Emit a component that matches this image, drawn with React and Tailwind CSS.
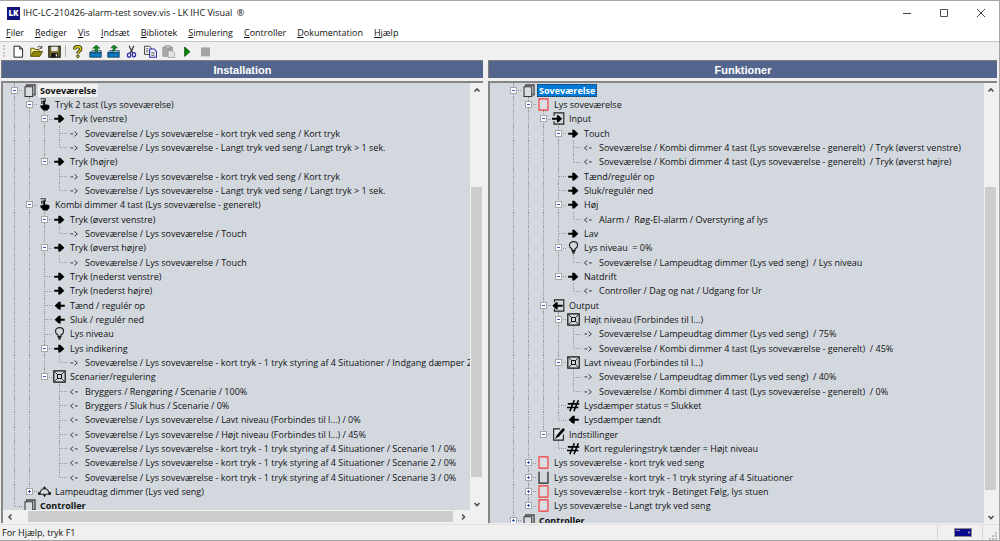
import React, { useState } from "react";

const menus = ["Filer", "Rediger", "Vis", "Indsæt", "Bibliotek", "Simulering", "Controller", "Dokumentation", "Hjælp"];

// [depth, icon, label, toggle]
const installation = [
  [0, "folder", "Soveværelse", "open"],
  [1, "touch", "Tryk 2 tast (Lys soveværelse)", "open"],
  [2, "right", "Tryk (venstre)", "open"],
  [3, "to", "Soveværelse / Lys soveværelse - kort tryk ved seng / Kort tryk"],
  [3, "to", "Soveværelse / Lys soveværelse - Langt tryk ved seng / Langt tryk > 1 sek."],
  [2, "right", "Tryk (højre)", "open"],
  [3, "to", "Soveværelse / Lys soveværelse - kort tryk ved seng / Kort tryk"],
  [3, "to", "Soveværelse / Lys soveværelse - Langt tryk ved seng / Langt tryk > 1 sek."],
  [1, "touch", "Kombi dimmer 4 tast (Lys soveværelse - generelt)", "open"],
  [2, "right", "Tryk (øverst venstre)", "open"],
  [3, "to", "Soveværelse / Lys soveværelse / Touch"],
  [2, "right", "Tryk (øverst højre)", "open"],
  [3, "to", "Soveværelse / Lys soveværelse / Touch"],
  [2, "right", "Tryk (nederst venstre)"],
  [2, "right", "Tryk (nederst højre)"],
  [2, "left", "Tænd / regulér op"],
  [2, "left", "Sluk / regulér ned"],
  [2, "bulb", "Lys niveau"],
  [2, "right", "Lys indikering", "open"],
  [3, "to", "Soveværelse / Lys soveværelse - kort tryk - 1 tryk styring af 4 Situationer / Indgang dæmper 2"],
  [2, "scene", "Scenarier/regulering", "open"],
  [3, "from", "Bryggers / Rengøring / Scenarie / 100%"],
  [3, "from", "Bryggers / Sluk hus / Scenarie / 0%"],
  [3, "from", "Soveværelse / Lys soveværelse / Lavt niveau (Forbindes til l...) / 0%"],
  [3, "from", "Soveværelse / Lys soveværelse / Højt niveau (Forbindes til l...) / 45%"],
  [3, "from", "Soveværelse / Lys soveværelse - kort tryk - 1 tryk styring af 4 Situationer / Scenarie 1 / 0%"],
  [3, "from", "Soveværelse / Lys soveværelse - kort tryk - 1 tryk styring af 4 Situationer / Scenarie 2 / 0%"],
  [3, "from", "Soveværelse / Lys soveværelse - kort tryk - 1 tryk styring af 4 Situationer / Scenarie 3 / 0%"],
  [1, "lamp", "Lampeudtag dimmer (Lys ved seng)", "closed"],
  [0, "folder", "Controller"],
];

const funktioner = [
  [0, "folder", "Soveværelse", "open"],
  [1, "redbox", "Lys soveværelse", "open"],
  [2, "input", "Input", "open"],
  [3, "right", "Touch", "open"],
  [4, "from", "Soveværelse / Kombi dimmer 4 tast (Lys soveværelse - generelt)  / Tryk (øverst venstre)"],
  [4, "from", "Soveværelse / Kombi dimmer 4 tast (Lys soveværelse - generelt)  / Tryk (øverst højre)"],
  [3, "right", "Tænd/regulér op"],
  [3, "right", "Sluk/regulér ned"],
  [3, "right", "Høj", "open"],
  [4, "from", "Alarm /  Røg-El-alarm / Overstyring af lys"],
  [3, "right", "Lav"],
  [3, "bulb", "Lys niveau  = 0%", "open"],
  [4, "from", "Soveværelse / Lampeudtag dimmer (Lys ved seng)  / Lys niveau"],
  [3, "right", "Natdrift", "open"],
  [4, "from", "Controller / Dag og nat / Udgang for Ur"],
  [2, "output", "Output", "open"],
  [3, "scene", "Højt niveau (Forbindes til l...)", "open"],
  [4, "to", "Soveværelse / Lampeudtag dimmer (Lys ved seng)  / 75%"],
  [4, "to", "Soveværelse / Kombi dimmer 4 tast (Lys soveværelse - generelt)  / 45%"],
  [3, "scene", "Lavt niveau (Forbindes til l...)", "open"],
  [4, "to", "Soveværelse / Lampeudtag dimmer (Lys ved seng)  / 40%"],
  [4, "to", "Soveværelse / Kombi dimmer 4 tast (Lys soveværelse - generelt)  / 0%"],
  [3, "hash", "Lysdæmper status = Slukket"],
  [3, "left", "Lysdæmper tændt"],
  [2, "edit", "Indstillinger", "open"],
  [3, "hash", "Kort reguleringstryk tænder = Højt niveau"],
  [1, "redbox", "Lys soveværelse - kort tryk ved seng", "closed"],
  [1, "cup", "Lys soveværelse - kort tryk - 1 tryk styring af 4 Situationer", "closed"],
  [1, "redbox", "Lys soveværelse - kort tryk - Betinget Følg, lys stuen", "closed"],
  [1, "redbox", "Lys soveværelse - Langt tryk ved seng", "closed"],
  [0, "folder", "Controller", "closed"],
];

const nodeIcons = {
  folder: (
    <>
      <path d="M4.500 3V1.200h10.300v12h-2" fill="none" stroke="#444" strokeWidth="1.600" />
      <path d="M2.500 3.500h9.500v12H2.500z" fill="#d9dde3" stroke="#333" strokeWidth="1.300" />
    </>
  ),
  touch: (
    <>
      <path d="M3 1h6v3H4.500v2.500H9" fill="none" stroke="#333" strokeWidth="1.300" />
      <path d="M6.500 3h2v5H11l3 1v3.500L12 14.500v1H6v-1L3 11.500V9h3.500z" fill="#000" />
    </>
  ),
  right: <path d="M1.500 7h5V3.500h2.500L14 8.200 9 13H6.500V9.500h-5z" fill="#000" />,
  left: <path d="M14.500 7h-5V3.500H7L2 8.200 7 13h2.500V9.500h5z" fill="#000" />,
  to: <path d="M3 8.500h3.500M8 5.500l3.500 3-3.500 3" stroke="#333" strokeWidth="1.200" fill="none" />,
  from: <path d="M12 8.500H8.500M6.500 5.500l-3.500 3 3.500 3" stroke="#333" strokeWidth="1.200" fill="none" />,
  bulb: (
    <path
      d="M6 11.500V9.500C4 8.500 3 7 3 5.200 3 2.500 5.200.8 8 .8s5 1.700 5 4.400c0 1.800-1 3.300-3 4.300v2zM6 13h4M6.500 15h3"
      fill="none"
      stroke="#222"
      strokeWidth="1.400"
    />
  ),
  scene: (
    <>
      <path d="M1 1h14v14H1z" fill="none" stroke="#111" strokeWidth="1.500" />
      <path d="M5.500 5.500h5v5h-5z" fill="none" stroke="#111" strokeWidth="1.300" />
      <path d="M2 2l3.500 3.500M14 2l-3.500 3.500M2 14l3.500-3.500M14 14l-3.500-3.500" stroke="#333" strokeWidth="1.200" />
    </>
  ),
  lamp: (
    <>
      <path d="M2 11.500C2.500 7 5 4.500 8 4.500s5.500 2.500 6 7z" fill="none" stroke="#222" strokeWidth="1.300" />
      <path d="M5.500 4.500 8 1.500l2.500 3zM0 9h3v3H0zM13 9h3v3h-3zM6 12h4l-2 3z" fill="#111" />
    </>
  ),
  redbox: <path d="M2.500 1h11v14h-11z" fill="#dcdde2" stroke="#ee3b3b" strokeWidth="1.400" />,
  cup: <path d="M2.500 1v14h11V1" fill="none" stroke="#222" strokeWidth="1.500" />,
  input: (
    <>
      <path d="M2.500 5V1h12v14h-12v-3.500" fill="none" stroke="#222" strokeWidth="1.400" />
      <path d="M0 7h6V4h2l4.500 4.200L8 12.500H6v-3H0z" fill="#000" />
    </>
  ),
  output: (
    <>
      <path d="M3 4V1h11.500v14H3v-3" fill="none" stroke="#222" strokeWidth="1.400" />
      <path d="M13 7H7V4H5L.5 8.200 5 12.500h2v-3h6z" fill="#000" />
    </>
  ),
  hash: <path d="M1 6h14M0 10.500h14M9 1.500 3.500 15M14 1.500 8.500 15" stroke="#000" strokeWidth="1.900" fill="none" />,
  edit: (
    <>
      <path d="M10 1H2v14h12V8" fill="#dfe3e8" stroke="#222" strokeWidth="1.400" />
      <path d="M13.500 0 16 2 9 10l-5.500 3.500L6 8.500z" fill="#000" />
    </>
  ),
};

const toolGroups = [
  [
    ["Ny", <path d="M2.500 1.500h7L13 5v10H2.500zM9.500 1.500V5H13" fill="#fff" stroke="#222" strokeWidth="1.200" />],
    [
      "Åbn",
      <>
        <path d="M1 14V4h4l1 1.500h5V8" fill="#f7ef8a" stroke="#5b5200" strokeWidth="1.200" />
        <path d="M1 14 4 8h11.500L12 14z" fill="#8f8400" stroke="#4a4300" />
        <path d="M9 3c2-2.200 4-1.800 5 .5M14.500 1v3h-3" fill="none" stroke="#222" />
      </>,
    ],
    [
      "Gem",
      <>
        <path d="M1 1.500h14v13.500H1z" fill="#77702a" stroke="#111" strokeWidth="1.300" />
        <path d="M4 2h8v5.500H4z" fill="#e8e8e8" />
        <path d="M4 10h8v5H4z" fill="#111" />
        <path d="M9.500 11h1.500v3H9.500z" fill="#eee" />
      </>,
    ],
  ],
  [
    [
      "Hjælp",
      <>
        <path d="M4.500 5.500C4.500 3 6 2 8.200 2S12 3.200 12 5.200C12 7.500 8.500 7.500 8.500 10.500" fill="none" stroke="#222" strokeWidth="4" />
        <path d="M4.500 5.500C4.500 3 6 2 8.200 2S12 3.200 12 5.200C12 7.500 8.500 7.500 8.500 10.500" fill="none" stroke="#d8cc00" strokeWidth="1.900" />
        <circle cx="8.500" cy="13.800" r="1.700" fill="#d8cc00" stroke="#222" />
      </>,
    ],
    [
      "Hent",
      <>
        <path d="M1 9.500 3.500 7H15v2.500z" fill="#9adcf5" stroke="#123" strokeWidth=".9" />
        <path d="M1 9.500h14V15H1z" fill="#0a7cc4" stroke="#0b3552" />
        <path d="M9 0l4.500 4h-3v4h-3V4h-3z" fill="#0a8a1c" stroke="#063d0c" strokeWidth=".6" />
      </>,
    ],
    [
      "Send",
      <>
        <path d="M1 9.500 3.500 7H15v2.500z" fill="#9adcf5" stroke="#123" strokeWidth=".9" />
        <path d="M1 9.500h14V15H1z" fill="#0a7cc4" stroke="#0b3552" />
        <path d="M8.500 0 13 3.500h-2.500C10.500 6 9 7.500 6 8c1.500-1 1.500-3 1.500-4.500H4.500z" fill="#0a8a1c" stroke="#063d0c" strokeWidth=".6" />
      </>,
    ],
    [
      "Klip",
      <>
        <path d="M5 1l4.500 9M11 1 6.500 10" stroke="#333" strokeWidth="1.400" fill="none" />
        <ellipse cx="5" cy="12.500" rx="2" ry="2.500" fill="none" stroke="#2a2aa8" strokeWidth="1.500" />
        <ellipse cx="11" cy="12" rx="2" ry="2.500" fill="none" stroke="#2a2aa8" strokeWidth="1.500" />
      </>,
    ],
  ],
  [
    [
      "Kopier",
      <>
        <path d="M.8 1.500h6L9 3.500v8H.8z" fill="#fff" stroke="#333" strokeWidth="1.200" />
        <path d="M7 5h5.500L15.300 8v7H7z" fill="#fff" stroke="#2a2aa8" strokeWidth="1.300" />
        <path d="M2.500 4.500h3M2.500 6.500h3M2.500 8.500h3M9 9h4M9 11h4M9 13h4" stroke="#445" strokeWidth=".9" />
      </>,
    ],
    [
      "Sæt ind",
      <>
        <path d="M1 2.500h12V14H1z" fill="#a8a8a8" stroke="#9a9a9a" />
        <path d="M4 1h6v3H4z" fill="#c8c8c8" stroke="#8c8c8c" />
        <path d="M7.500 7h5L15.500 10v5.500h-8z" fill="#e4e4e4" stroke="#9a9a9a" />
      </>,
    ],
  ],
  [
    ["Kør", <path d="M4.500 2.500v11.500l6.500-5.700z" fill="#008a00" stroke="#064d06" strokeWidth="1" />],
    ["Stop", <path d="M2.500 3h11v11h-11z" fill="#a3a3a3" />],
  ],
];

const arrows = {
  up: "M1.500 5.500 4 3l2.500 2.500",
  down: "M1.500 3 4 5.500 6.500 3",
  left: "M5.500 1.500 3 4l2.500 2.500",
  right: "M3 1.500 5.500 4 3 6.500",
};

function ScrollButton({ dir }) {
  return (
    <button aria-label={`Rul ${dir}`} className="flex h-[13px] w-[13px] shrink-0 items-center justify-center">
      <svg viewBox="0 0 8 8" className="h-2 w-2">
        <path d={arrows[dir]} fill="none" stroke="#505050" strokeWidth="1.600" />
      </svg>
    </button>
  );
}

// parts: share of the track before, under and after the thumb
function ScrollBar({ horizontal, parts }) {
  return (
    <div className={horizontal ? "flex h-[13px] min-w-0 flex-1" : "flex w-[13px] shrink-0 flex-col"}>
      <ScrollButton dir={horizontal ? "left" : "up"} />
      <div style={{ flexGrow: parts[0] }} />
      <div className={horizontal ? "my-px bg-[#cdcdcd]" : "mx-px bg-[#cdcdcd]"} style={{ flexGrow: parts[1] }} />
      <div style={{ flexGrow: parts[2] }} />
      <ScrollButton dir={horizontal ? "right" : "down"} />
    </div>
  );
}

function TreeRow({ row, guides, last, active, expanded, onToggle }) {
  const [depth, icon, label, toggle] = row;
  let labelClass = "px-[2px] whitespace-pre leading-[13px]";
  if (depth === 0) labelClass += " font-bold";
  if (active === "focus") labelClass += " bg-[#0078d7] text-white outline-1 -outline-offset-1 outline-dotted outline-[#333]";
  if (active === "idle") labelClass += " bg-[#f0f0f0]";

  return (
    <li role="treeitem" aria-level={depth + 1} className="flex h-[14px] items-center nth-[3n]:h-[15px]">
      {guides.map((on, i) => (
        <span key={i} className="flex w-[15px] shrink-0 self-stretch pl-[7px]">
          {on && <span className="border-l border-dotted border-[#96999e]" />}
        </span>
      ))}
      <span className="relative flex w-[15px] shrink-0 items-center justify-center self-stretch">
        <span
          className={
            last
              ? "absolute top-0 left-[7px] h-1/2 border-l border-dotted border-[#96999e]"
              : "absolute top-0 left-[7px] h-full border-l border-dotted border-[#96999e]"
          }
        />
        <span className="absolute top-1/2 right-0 left-[8px] border-t border-dotted border-[#96999e]" />
        {toggle && (
          <button
            onClick={onToggle}
            aria-label={expanded ? `Fold ${label} sammen` : `Fold ${label} ud`}
            className="relative h-[7px] w-[7px] border border-[#a3a6ab] bg-white"
          >
            <svg viewBox="0 0 5 5" className="block h-full w-full">
              <path d={expanded ? "M1 2.500h3" : "M1 2.500h3M2.500 1v3"} stroke="#3b57b5" strokeWidth="1" />
            </svg>
          </button>
        )}
      </span>
      <svg viewBox="0 0 16 16" className="mr-[2px] ml-px h-[13px] w-[13px] shrink-0">
        {nodeIcons[icon]}
      </svg>
      <span className={labelClass}>{label}</span>
    </li>
  );
}

function Tree({ rows, label, active, className }) {
  const [closed, setClosed] = useState(() => rows.map((r) => r[3] === "closed"));

  const toggle = (index) => {
    setClosed(closed.map((c, i) => (i === index ? !c : c)));
  };

  // true when another row on this level follows inside the same parent
  const continues = (index, level) => {
    const next = rows.slice(index + 1).find((r) => r[0] <= level);
    return next !== undefined && next[0] === level;
  };

  let hideBelow = Infinity;
  const visible = [];
  rows.forEach((row, i) => {
    if (row[0] > hideBelow) return;
    hideBelow = closed[i] ? row[0] : Infinity;
    visible.push(i);
  });

  return (
    <ul role="tree" aria-label={label} className={`min-w-0 flex-1 overflow-hidden bg-[#d3d8df] ${className}`}>
      {visible.map((i) => (
        <TreeRow
          key={i}
          row={rows[i]}
          guides={Array.from({ length: rows[i][0] }, (_, level) => continues(i, level))}
          last={!continues(i, rows[i][0])}
          active={i === 0 ? active : undefined}
          expanded={!closed[i]}
          onToggle={() => toggle(i)}
        />
      ))}
    </ul>
  );
}

function Pane({ title, vertical, horizontal, children, className }) {
  return (
    <section className={`flex min-w-0 flex-col ${className}`}>
      <h2 className="h-[18px] shrink-0 border-t border-l border-[#7d7d7d] bg-[#53658d] text-center font-['Liberation_Sans',sans-serif] text-[11px] leading-[18px] font-bold text-white">
        {title}
      </h2>
      <div className="mt-[3px] flex min-h-0 flex-1 flex-col border-t-2 border-l-2 border-[#858585]">
        <div className="flex min-h-0 flex-1">
          {children}
          <ScrollBar parts={vertical} />
        </div>
        {horizontal && (
          <div className="flex pr-[13px]">
            <ScrollBar horizontal parts={horizontal} />
          </div>
        )}
      </div>
    </section>
  );
}

export default function App() {
  return (
    <div className="flex h-screen flex-col border-t border-r border-b border-[#a6a6a6] bg-[#f0f0f0] font-['Open_Sans',sans-serif] text-[9px] text-[#111]">
      <header className="flex h-6 shrink-0 items-center bg-white pl-[7px]">
        <span className="flex h-[13px] w-[13px] items-center justify-center bg-[#12127c] text-[8px] font-extrabold text-white">LK</span>
        <h1 className="ml-[3px] flex-1 whitespace-pre">IHC-LC-210426-alarm-test sovev.vis - LK IHC Visual  ®</h1>
        <button aria-label="Minimer" className="flex h-full w-[37px] items-center justify-center">
          <svg viewBox="0 0 10 10" className="h-[10px] w-[10px]">
            <path d="M1 5.500h8" stroke="#444" />
          </svg>
        </button>
        <button aria-label="Maksimer" className="flex h-full w-[37px] items-center justify-center">
          <svg viewBox="0 0 10 10" className="h-[10px] w-[10px]">
            <path d="M1.500 1.500h7v7h-7z" fill="none" stroke="#555" />
          </svg>
        </button>
        <button aria-label="Luk" className="flex h-full w-[37px] items-center justify-center">
          <svg viewBox="0 0 10 10" className="h-[10px] w-[10px]">
            <path d="M1 1l8 8M9 1 1 9" stroke="#444" />
          </svg>
        </button>
      </header>

      <nav className="flex h-[17px] shrink-0 items-center gap-[11px] border-b border-[#c4c4c4] bg-white pl-[6px]">
        {menus.map((m) => (
          <button key={m}>
            <span className="underline underline-offset-1">{m[0]}</span>
            {m.slice(1)}
          </button>
        ))}
      </nav>

      <div role="toolbar" className="flex h-[18px] shrink-0 items-center gap-px pl-[3px]">
        <span className="mr-[3px] h-3 border-l-2 border-dotted border-[#c8c8c8]" />
        {toolGroups.map((group, g) => (
          <React.Fragment key={g}>
            {g === 1 && <span className="mx-px h-3 border-l border-[#b0b0b0]" />}
            <div className="flex">
              {group.map(([name, drawing]) => (
                <button key={name} aria-label={name} className="flex h-4 w-[18px] items-center justify-center">
                  <svg viewBox="0 0 16 16" className="h-[13px] w-[13px]">
                    {drawing}
                  </svg>
                </button>
              ))}
            </div>
          </React.Fragment>
        ))}
      </div>

      <main className="flex min-h-0 flex-1 gap-[5px] pr-[2px] pl-px">
        <Pane title="Installation" vertical={[91, 290, 20]} horizontal={[12, 426, 4]} className="flex-[482]">
          <Tree rows={installation} label="Installation" active="idle" className="pl-1" />
        </Pane>
        <Pane title="Funktioner" vertical={[91, 302, 20]} className="flex-[509]">
          <Tree rows={funktioner} label="Funktioner" active="focus" className="pl-4" />
        </Pane>
      </main>

      <footer className="mt-px flex h-4 shrink-0 items-center border-t border-[#e0e0e0] pl-[2px]">
        <span className="flex-1">For Hjælp, tryk F1</span>
        <span className="flex h-full w-[46px] items-center justify-center border-x border-[#d5d5d5] pl-[6px]">
          <svg viewBox="0 0 18 9" className="h-[9px] w-[18px]">
            <path d="M.5.5h17v8H.5z" fill="#0a0a8c" stroke="#8a8a8a" />
            <path d="M2 2.500h4" stroke="#8f8fd0" />
            <path d="M14 3.500h2v2h-2z" fill="#8f8fa8" />
          </svg>
        </span>
        <svg viewBox="0 0 16 16" className="h-4 w-4">
          <path d="M12 7h2v2h-2zM9 10h2v2H9zM12 10h2v2h-2zM6 13h2v2H6zM9 13h2v2H9zM12 13h2v2h-2z" fill="#bdbdbd" />
        </svg>
      </footer>
    </div>
  );
}
